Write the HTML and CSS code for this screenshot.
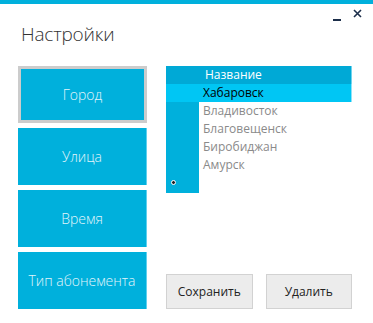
FILE: index.html
```html
<!DOCTYPE html>
<html lang="ru">
<head>
    <meta charset="UTF-8">
    <title>Настройки</title>
    <link rel="stylesheet" href="styles.css">
</head>
<body>
    <div class="topbar"></div>
    <div class="header">
        <h1>Настройки</h1>
        <div class="controls">
            <span class="ctl-min"></span>
            <svg class="ctl-close" width="9" height="9" viewBox="0 0 9 9">
                <path d="M1 1 L8 8 M8 1 L1 8" stroke="#1c2e4a" stroke-width="1.6"/>
            </svg>
        </div>
    </div>
    <div class="main">
        <div class="menu">
            <button class="menu-btn active">Город</button>
            <button class="menu-btn">Улица</button>
            <button class="menu-btn">Время</button>
            <button class="menu-btn">Тип абонемента</button>
        </div>
        <div class="panel">
            <div class="grid">
                <div class="grid-row head">
                    <div class="row-head"></div>
                    <div class="cell">Название</div>
                </div>
                <div class="grid-row selected">
                    <div class="row-head"></div>
                    <div class="cell">Хабаровск</div>
                </div>
                <div class="grid-row">
                    <div class="row-head"></div>
                    <div class="cell">Владивосток</div>
                </div>
                <div class="grid-row">
                    <div class="row-head"></div>
                    <div class="cell">Благовещенск</div>
                </div>
                <div class="grid-row">
                    <div class="row-head"></div>
                    <div class="cell">Биробиджан</div>
                </div>
                <div class="grid-row">
                    <div class="row-head"></div>
                    <div class="cell">Амурск</div>
                </div>
                <div class="grid-row new">
                    <div class="row-head"><span class="dot"></span></div>
                    <div class="cell"></div>
                </div>
            </div>
            <div class="actions">
                <button class="act-btn">Сохранить</button>
                <button class="act-btn">Удалить</button>
            </div>
        </div>
    </div>
</body>
</html>
```

FILE: styles.css
```css
body {
    margin: 0;
    background-color: #ffffff;
    font-family: "Open Sans", "Noto Sans", sans-serif;
    width: 373px;
    height: 323px;
    overflow: hidden;
}
.topbar {
    height: 4px;
    background-color: #00b0dc;
}
.header {
    display: flex;
    justify-content: space-between;
    align-items: flex-start;
    height: 62px;
}
h1 {
    margin: 17px 0 0 21px;
    font-size: 19px;
    font-weight: 300;
    color: #333333;
    letter-spacing: -0.2px;
}
.controls {
    display: flex;
    align-items: flex-start;
    gap: 12px;
    padding: 5px 11px 0 0;
}
.ctl-min {
    width: 8px;
    height: 2px;
    margin-top: 10px;
    background-color: #1c2e4a;
}
.ctl-close {
    display: block;
}
.main {
    display: flex;
    gap: 19px;
    padding-left: 18px;
}
.menu {
    display: flex;
    flex-direction: column;
    gap: 5px;
    width: 129px;
}
.menu-btn {
    height: 57px;
    border: none;
    border-right: 1px solid #5fd0ee;
    background-color: #00b0dc;
    color: #e2f5fb;
    font-family: "Open Sans", "Noto Sans", sans-serif;
    font-size: 14px;
    font-weight: 300;
    padding: 0;
}
.menu-btn.active {
    height: 57px;
    border: 3px solid #cccccc;
}
.panel {
    display: flex;
    flex-direction: column;
    width: 186px;
}
.grid {
    display: flex;
    flex-direction: column;
    font-size: 12px;
}
.grid-row {
    display: flex;
    height: 18px;
    line-height: 18px;
}
.row-head {
    width: 33px;
    background-color: #00b0dc;
    position: relative;
}
.cell {
    flex: 1;
    padding-left: 4px;
    color: #8a8a8a;
}
.grid-row.head .row-head,
.grid-row.head .cell {
    background-color: #00a9d6;
    color: #ffffff;
}
.grid-row.head .cell {
    padding-left: 6px;
    border-right: 1px solid #6fd4ee;
}
.grid-row.selected .row-head,
.grid-row.selected .cell {
    background-color: #00c6f4;
}
.grid-row.selected .cell {
    color: #000000;
    border-right: 1px solid #8fe2f8;
}
.grid-row.new {
    height: 19px;
}
.dot {
    position: absolute;
    left: 5px;
    top: 6px;
    width: 3px;
    height: 3px;
    border-radius: 50%;
    background-color: #222222;
    border: 1px solid #ffffff;
}
.actions {
    display: flex;
    gap: 13px;
    margin-top: 81px;
}
.act-btn {
    width: 87px;
    height: 35px;
    background-color: #ececec;
    border: 1px solid #d2d2d2;
    color: #222222;
    font-family: "Open Sans", "Noto Sans", sans-serif;
    font-size: 12px;
    padding: 0;
}
```
